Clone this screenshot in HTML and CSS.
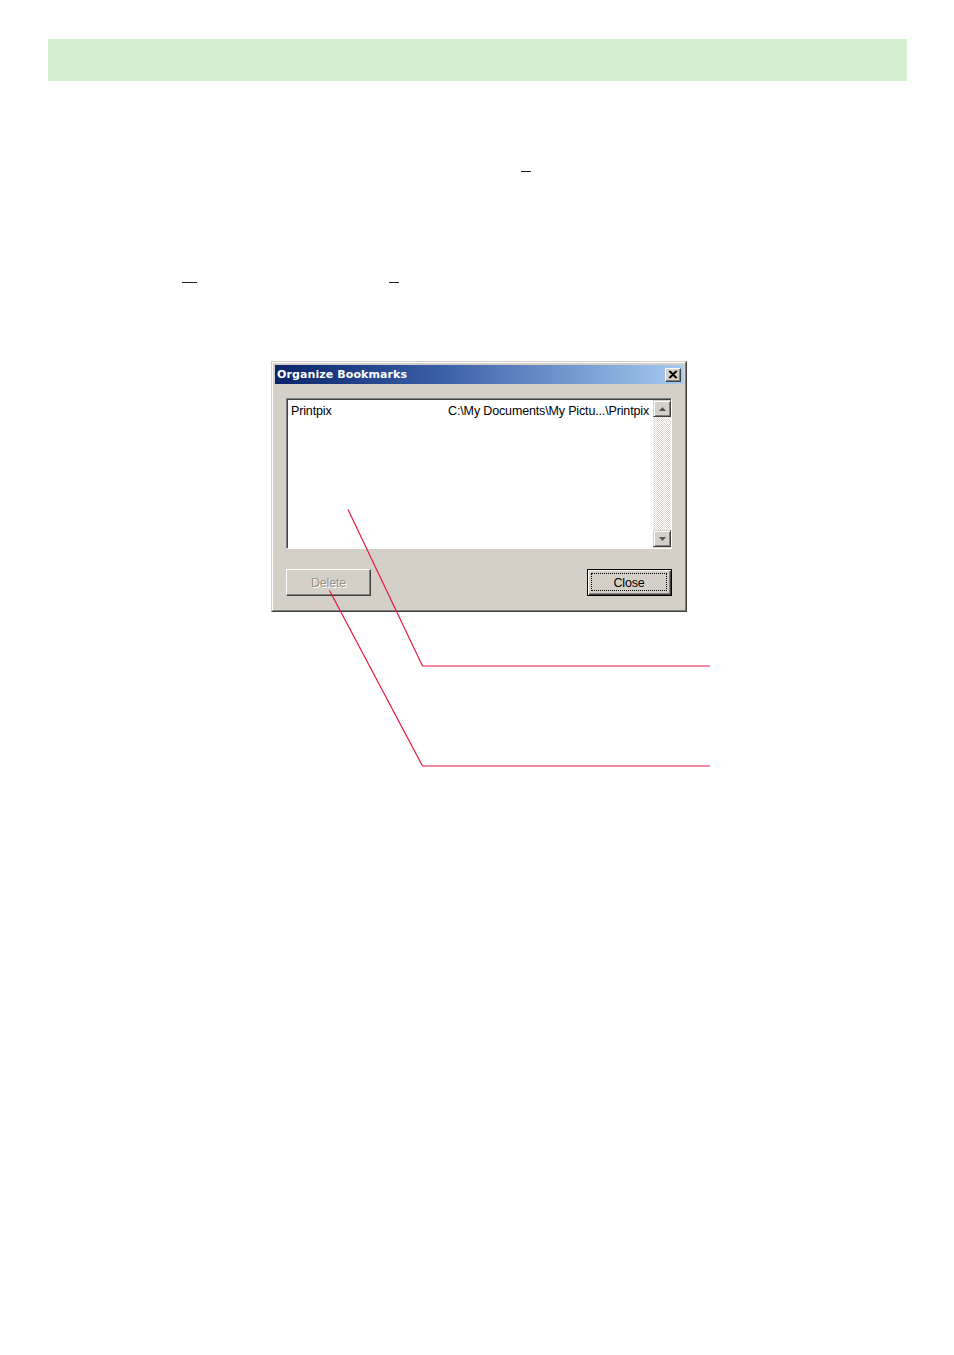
FILE: index.html
```html
<!DOCTYPE html>
<html lang="en">
<head>
<meta charset="utf-8">
<title>Organize Bookmarks</title>
<link rel="stylesheet" href="styles.css">
</head>
<body>
<div class="page">
  <div class="band"></div>

  <div class="rule rule-a"><span class="mark mark-a1"></span></div>
  <div class="rule rule-b"><span class="mark mark-b1"></span><span class="mark mark-b2"></span></div>

  <div class="figure">
    <div class="win">
      <div class="win-inner">
        <div class="titlebar">
          <span class="title">Organize Bookmarks</span>
          <span class="xbtn">
            <svg width="10" height="9" viewBox="0 0 10 9"><path d="M1 1 L8 8 M2 1 L9 8 M8 1 L1 8 M9 1 L2 8" stroke="#000" stroke-width="1.2" fill="none"/></svg>
          </span>
        </div>
        <div class="client">
          <div class="listbox">
            <div class="list-area">
              <div class="row">
                <span class="name">Printpix</span>
                <span class="path">C:\My Documents\My Pictu...\Printpix</span>
              </div>
            </div>
            <div class="vscroll">
              <span class="sbtn">
                <svg width="7" height="4" viewBox="0 0 7 4"><path d="M3.5 0 L7 4 L0 4 Z" fill="#555"/></svg>
              </span>
              <span class="track"></span>
              <span class="sbtn">
                <svg width="7" height="4" viewBox="0 0 7 4"><path d="M0 0 L7 0 L3.5 4 Z" fill="#555"/></svg>
              </span>
            </div>
          </div>
          <div class="buttons">
            <span class="btn btn-disabled">Delete</span>
            <span class="btn btn-default"><span class="focus">Close</span></span>
          </div>
        </div>
      </div>
    </div>
  </div>
</div>

<svg class="callouts" width="954" height="1355" viewBox="0 0 954 1355">
  <polyline points="348,509.5 422.5,666 710,666" fill="none" stroke="#e5173f" stroke-width="1.2"/>
  <polyline points="329.5,590.5 422.5,766 710,766" fill="none" stroke="#e5173f" stroke-width="1.2"/>
</svg>
</body>
</html>
```

FILE: styles.css
```css
html, body {
  margin: 0;
  padding: 0;
  background: #ffffff;
}

body {
  position: relative;
  width: 954px;
  height: 1355px;
  overflow: hidden;
  font-family: "Liberation Sans", Arial, sans-serif;
}

.page {
  padding: 39px 47px 0 48px;
}

.band {
  height: 42px;
  background: #d3efcf;
}

.rule {
  position: relative;
  height: 1px;
  display: flex;
}

.rule-a {
  margin-top: 90px;
}

.rule-b {
  margin-top: 110px;
}

.mark {
  display: block;
  height: 1px;
  background: #231f20;
}

.mark-a1 {
  margin-left: 473px;
  width: 10px;
}

.mark-b1 {
  margin-left: 134px;
  width: 15px;
}

.mark-b2 {
  margin-left: 192px;
  width: 10px;
}

.figure {
  margin-top: 78px;
  padding-left: 223px;
}

/* Windows classic dialog */
.win {
  width: 416px;
  height: 251px;
  box-sizing: border-box;
  border: 1px solid;
  border-color: #d4d0c8 #404040 #404040 #d4d0c8;
  background: #d4d0c8;
}

.win-inner {
  height: 100%;
  box-sizing: border-box;
  border: 1px solid;
  border-color: #ffffff #808080 #808080 #ffffff;
  padding: 2px;
  display: flex;
  flex-direction: column;
}

.titlebar {
  height: 19px;
  flex: none;
  display: flex;
  align-items: center;
  justify-content: space-between;
  padding: 0 2px 0 2px;
  background: linear-gradient(to right, #0a246a 0%, #3a5ea6 40%, #a6caf0 100%);
}

.title {
  color: #ffffff;
  font-family: "DejaVu Sans", Verdana, sans-serif;
  font-weight: bold;
  font-size: 11px;
  letter-spacing: 0.1px;
  line-height: 19px;
}

.xbtn {
  width: 16px;
  height: 14px;
  box-sizing: border-box;
  background: #d4d0c8;
  border: 1px solid;
  border-color: #ffffff #404040 #404040 #ffffff;
  box-shadow: inset -1px -1px 0 #808080;
  display: flex;
  align-items: center;
  justify-content: center;
}

.xbtn svg {
  display: block;
}

.client {
  flex: 1;
  display: flex;
  flex-direction: column;
  padding: 14px 11px 0 11px;
}

.listbox {
  height: 151px;
  box-sizing: border-box;
  border: 1px solid;
  border-color: #808080 #ffffff #ffffff #808080;
  display: flex;
  background: #ffffff;
}

.listbox > .list-area,
.listbox > .vscroll {
  border-top: 1px solid #404040;
}

.list-area {
  flex: 1;
  border-left: 1px solid #404040;
  padding: 4px 4px 0 3px;
  box-sizing: border-box;
}

.row {
  display: flex;
  justify-content: space-between;
  font-size: 12.5px;
  line-height: 15px;
  color: #000000;
  letter-spacing: -0.15px;
}

.vscroll {
  width: 18px;
  display: flex;
  flex-direction: column;
  border-bottom: 1px solid #d4d0c8;
}

.sbtn {
  width: 18px;
  height: 17px;
  box-sizing: border-box;
  background: #d4d0c8;
  border: 1px solid;
  border-color: #d4d0c8 #404040 #404040 #d4d0c8;
  box-shadow: inset 1px 1px 0 #ffffff, inset -1px -1px 0 #808080;
  display: flex;
  align-items: center;
  justify-content: center;
  flex: none;
}

.track {
  flex: 1;
  background-color: #ffffff;
  background-image: conic-gradient(#dcd8d0 25%, #ffffff 0 50%, #dcd8d0 0 75%, #ffffff 0);
  background-size: 2px 2px;
}

.buttons {
  display: flex;
  justify-content: space-between;
  margin-top: 20px;
}

.btn {
  width: 85px;
  height: 27px;
  box-sizing: border-box;
  display: flex;
  align-items: center;
  justify-content: center;
  font-size: 12.5px;
  letter-spacing: -0.2px;
  background: #d4d0c8;
}

.btn-disabled {
  border: 1px solid;
  border-color: #ffffff #404040 #404040 #ffffff;
  box-shadow: inset -1px -1px 0 #808080;
  color: #959189;
  text-shadow: 1px 1px 0 #ffffff;
  padding-top: 1px;
}

.btn-default {
  border: 1px solid #000000;
  box-shadow: inset 1px 1px 0 #ffffff, inset -1px -1px 0 #404040, inset -2px -2px 0 #808080;
  color: #000000;
  padding: 3px 4px 4px 3px;
}

.focus {
  flex: 1;
  align-self: stretch;
  display: flex;
  align-items: center;
  justify-content: center;
  border: 1px dotted #000000;
  padding-top: 1px;
}

.callouts {
  position: absolute;
  left: 0;
  top: 0;
  pointer-events: none;
}
```
